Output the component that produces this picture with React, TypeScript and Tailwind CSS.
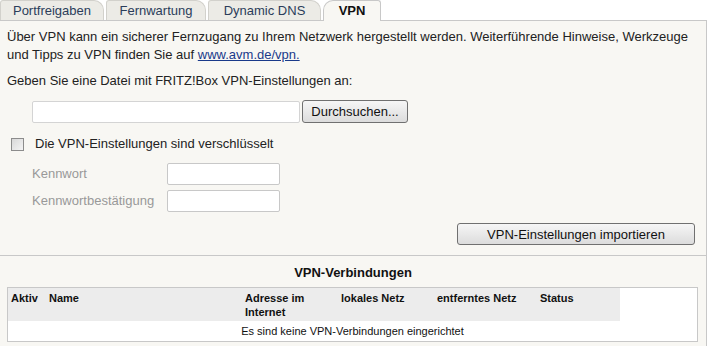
const tabs = [
  { label: 'Portfreigaben', w: 'w-[104px]' },
  { label: 'Fernwartung', w: 'w-[100px]' },
  { label: 'Dynamic DNS', w: 'w-[113px]' },
];

const columns = [
  { label: 'Aktiv', w: 'w-[38px]' },
  { label: 'Name', w: 'w-[196px]' },
  { label: 'Adresse im Internet', w: 'w-[96px]' },
  { label: 'lokales Netz', w: 'w-[96px]' },
  { label: 'entferntes Netz', w: 'w-[103px]' },
  { label: 'Status', w: 'w-[83px]' },
];

function Button({ children, className }: { children: React.ReactNode; className: string }) {
  return (
    <button
      className={`h-[22px] rounded-[3px] border border-[#707070] bg-gradient-to-b from-[#f6f6f6] to-[#dcdcdc] text-[13px] text-[#111] leading-none ${className}`}
    >
      {children}
    </button>
  );
}

export default function App() {
  return (
    <div className="w-[713px] h-[346px] overflow-hidden bg-white font-['Liberation_Sans',Arial,sans-serif] text-[13px] text-[#222]">
      <div className="flex h-[20px] items-end gap-[2px]">
        {tabs.map((t) => (
          <div
            key={t.label}
            className={`${t.w} h-[20px] flex items-center justify-center rounded-tl-[3px] rounded-tr-[10px] border border-b-0 border-[#d2d1cc] bg-[#ecebe6] text-[#2b3d5a]`}
          >
            {t.label}
          </div>
        ))}
        <div className="w-[58px] h-[21px] -mb-px flex items-center justify-center rounded-tl-[10px] rounded-tr-[3px] border border-b-0 border-[#c8c8c8] bg-[#f8f7f3] font-bold text-[#111] relative z-10">
          VPN
        </div>
      </div>

      <div className="w-[707px] h-[326px] border-t border-r border-[#c8c8c8] bg-[#f8f7f3]">
        <div className="px-[7px] pt-[7px]">
          <p className="leading-[18px]">
            Über VPN kann ein sicherer Fernzugang zu Ihrem Netzwerk hergestellt werden. Weiterführende Hinweise, Werkzeuge
            und Tipps zu VPN finden Sie auf <a className="text-[#1a3a8a] underline">www.avm.de/vpn.</a>
          </p>
          <p className="mt-[8px] leading-[18px]">Geben Sie eine Datei mit FRITZ!Box VPN-Einstellungen an:</p>

          <div className="mt-[10px] ml-[25px] flex items-center gap-[2px]">
            <div className="w-[268px] h-[22px] rounded-[2px] border border-[#d4d4d4] bg-white" />
            <Button className="w-[106px] h-[23px]">Durchsuchen...</Button>
          </div>

          <div className="mt-[12px] ml-[4px] flex items-center gap-[11px] h-[18px]">
            <div className="w-[13px] h-[13px] border border-[#8c8c8c] bg-gradient-to-br from-[#d8d8d8] to-[#f4f4f4]" />
            <span>Die VPN-Einstellungen sind verschlüsselt</span>
          </div>

          <div className="mt-[10px] ml-[25px] flex flex-col gap-[5px] text-[#999]">
            <div className="flex items-center">
              <span className="w-[135px]">Kennwort</span>
              <div className="w-[113px] h-[22px] rounded-[2px] border border-[#c8c8c8] bg-white" />
            </div>
            <div className="flex items-center">
              <span className="w-[135px]">Kennwortbestätigung</span>
              <div className="w-[113px] h-[22px] rounded-[2px] border border-[#c8c8c8] bg-white" />
            </div>
          </div>

          <div className="mt-[11px] flex justify-end pr-[4px]">
            <Button className="w-[238px]">VPN-Einstellungen importieren</Button>
          </div>
        </div>

        <div className="mt-[10px] border-t border-[#c8c8c8]" />

        <h3 className="mt-[9px] text-center font-bold leading-[16px] text-[#111]">VPN-Verbindungen</h3>

        <div className="mx-[7px] mt-[6px] w-[691px] border border-[#c8c8c8] bg-white text-[11px]">
          <div className="flex">
            <div className="flex h-[33px] bg-[#ececec]">
              {columns.map((c) => (
                <div key={c.label} className={`${c.w} px-[3px] pt-[3px] font-bold leading-[14px] text-[#111]`}>
                  {c.label}
                </div>
              ))}
            </div>
          </div>
          <div className="h-[20px] flex items-center justify-center text-[#111]">
            Es sind keine VPN-Verbindungen eingerichtet
          </div>
        </div>
      </div>
    </div>
  );
}
